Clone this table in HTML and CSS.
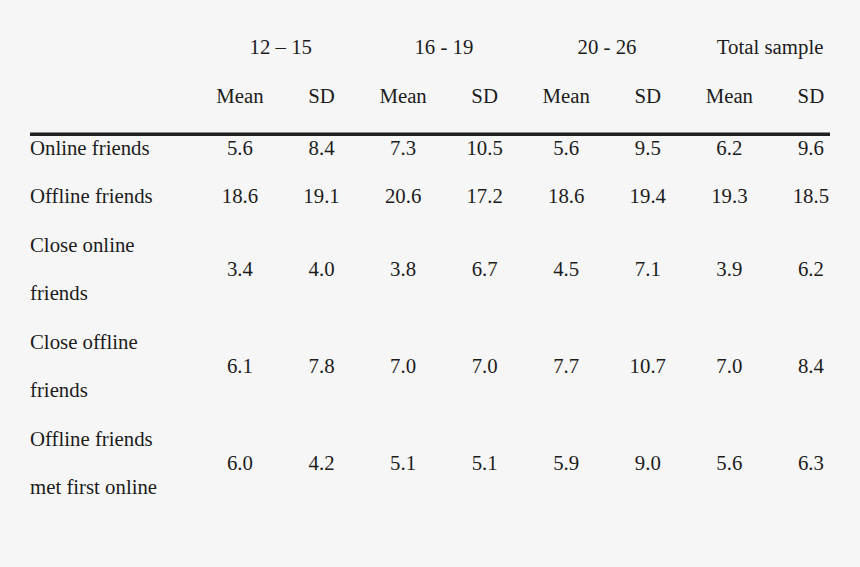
FILE: index.html
```html
<!DOCTYPE html>
<html>
<head>
<meta charset="utf-8">
<link rel="stylesheet" href="styles.css">
</head>
<body>
<div class="table">
  <div class="cell label"></div>
  <div class="cell group">12 – 15</div>
  <div class="cell group">16 - 19</div>
  <div class="cell group">20 - 26</div>
  <div class="cell group">Total sample</div>

  <div class="cell label"></div>
  <div class="cell num">Mean</div><div class="cell num">SD</div>
  <div class="cell num">Mean</div><div class="cell num">SD</div>
  <div class="cell num">Mean</div><div class="cell num">SD</div>
  <div class="cell num">Mean</div><div class="cell num">SD</div>

  <div class="rule"></div>

  <div class="cell label">Online friends</div>
  <div class="cell num">5.6</div><div class="cell num">8.4</div>
  <div class="cell num">7.3</div><div class="cell num">10.5</div>
  <div class="cell num">5.6</div><div class="cell num">9.5</div>
  <div class="cell num">6.2</div><div class="cell num">9.6</div>

  <div class="cell label">Offline friends</div>
  <div class="cell num">18.6</div><div class="cell num">19.1</div>
  <div class="cell num">20.6</div><div class="cell num">17.2</div>
  <div class="cell num">18.6</div><div class="cell num">19.4</div>
  <div class="cell num">19.3</div><div class="cell num">18.5</div>

  <div class="cell label">Close online<br>friends</div>
  <div class="cell num">3.4</div><div class="cell num">4.0</div>
  <div class="cell num">3.8</div><div class="cell num">6.7</div>
  <div class="cell num">4.5</div><div class="cell num">7.1</div>
  <div class="cell num">3.9</div><div class="cell num">6.2</div>

  <div class="cell label">Close offline<br>friends</div>
  <div class="cell num">6.1</div><div class="cell num">7.8</div>
  <div class="cell num">7.0</div><div class="cell num">7.0</div>
  <div class="cell num">7.7</div><div class="cell num">10.7</div>
  <div class="cell num">7.0</div><div class="cell num">8.4</div>

  <div class="cell label">Offline friends<br>met first online</div>
  <div class="cell num">6.0</div><div class="cell num">4.2</div>
  <div class="cell num">5.1</div><div class="cell num">5.1</div>
  <div class="cell num">5.9</div><div class="cell num">9.0</div>
  <div class="cell num">5.6</div><div class="cell num">6.3</div>
</div>
</body>
</html>
```
FILE: styles.css
```css
html, body {
  margin: 0;
  background: #f6f6f6;
}
body {
  padding: 23.25px 0 0 30px;
  font-family: "Times New Roman", "Liberation Serif", Tinos, serif;
  font-size: 20.8px;
  color: #1c1c1c;
}
.table {
  display: grid;
  grid-template-columns: 169.2px repeat(8, 81.57px);
  align-items: center;
}
.cell {
  line-height: 48.5px;
  white-space: nowrap;
}
.label {
  text-align: left;
}
.num {
  text-align: center;
}
.group {
  grid-column: span 2;
  text-align: center;
}
.rule {
  grid-column: 1 / -1;
  margin: 11.25px 21.8px -11.75px 0;
  height: 3px;
  border-top: 1px solid #8a8a8a;
  background: #202020;
}
```
